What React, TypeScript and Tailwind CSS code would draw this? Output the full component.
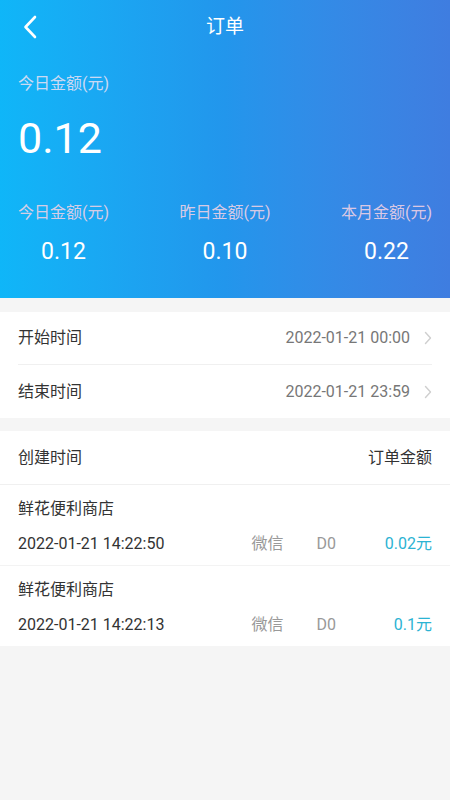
import React from "react";

const font = { fontFamily: 'Roboto, "Noto Sans CJK SC", sans-serif' };

function Chevron() {
  return (
    <svg width="8" height="14" viewBox="0 0 8 14" fill="none">
      <path d="M1.5 1.5 L6.5 7 L1.5 12.5" stroke="#cfcfcf" strokeWidth="1.4" strokeLinecap="round" strokeLinejoin="round" />
    </svg>
  );
}

function Stat({ label, value }: { label: string; value: string }) {
  return (
    <div className="flex flex-col items-center">
      <div className="text-[16px] leading-[20px] text-[#f0d2e4]/90">{label}</div>
      <div className="mt-[15px] text-[23px] leading-[28px] text-white">{value}</div>
    </div>
  );
}

function Item({ time, amount }: { time: string; amount: string }) {
  return (
    <div className="px-[18px] pt-[14px] pb-[11px]">
      <div className="text-[16px] leading-[20px] text-[#333]">鲜花便利商店</div>
      <div className="mt-[15px] flex items-center text-[16px] leading-[20px]">
        <div className="flex-1 text-[#333]">{time}</div>
        <div className="text-[#999]">微信</div>
        <div className="ml-[33px] text-[#999]">D0</div>
        <div className="w-[96px] text-right text-[#2bb3d3]">{amount}</div>
      </div>
    </div>
  );
}

export default function App() {
  return (
    <div className="min-h-[800px] w-[450px] bg-[#f5f5f5]" style={font}>
      <div className="h-[298px] bg-gradient-to-r from-[#0fb6f8] via-[#2296ec] to-[#3f7de0] px-[18px]">
        <div className="relative flex h-[54px] items-center justify-center">
          <svg className="absolute left-[5px] top-[15px]" width="14" height="24" viewBox="0 0 14 24" fill="none">
            <path d="M12 2 L2.5 12 L12 22" stroke="white" strokeWidth="2.6" strokeLinecap="round" strokeLinejoin="round" />
          </svg>
          <div className="text-[19px] leading-[24px] text-white">订单</div>
        </div>
        <div className="mt-[20px] text-[16px] leading-[20px] text-[#e4e0f3]/90">今日金额(元)</div>
        <div className="mt-[20px] text-[43px] leading-[48px] text-white">0.12</div>
        <div className="mt-[41px] flex justify-between">
          <Stat label="今日金额(元)" value="0.12" />
          <Stat label="昨日金额(元)" value="0.10" />
          <Stat label="本月金额(元)" value="0.22" />
        </div>
      </div>

      <div className="mt-[14px] bg-white">
        <div className="flex h-[52px] items-center px-[18px]">
          <div className="flex-1 text-[16px] text-[#333]">开始时间</div>
          <div className="text-[16px] text-[#777]">2022-01-21 00:00</div>
          <div className="ml-[14px]"><Chevron /></div>
        </div>
        <div className="mx-[18px] h-px bg-[#f0f0f0]" />
        <div className="flex h-[53px] items-center px-[18px]">
          <div className="flex-1 text-[16px] text-[#333]">结束时间</div>
          <div className="text-[16px] text-[#777]">2022-01-21 23:59</div>
          <div className="ml-[14px]"><Chevron /></div>
        </div>
      </div>

      <div className="mt-[13px] bg-white">
        <div className="flex h-[53px] items-center justify-between px-[18px] text-[16px] text-[#333]">
          <div>创建时间</div>
          <div>订单金额</div>
        </div>
        <div className="h-px bg-[#f0f0f0]" />
        <Item time="2022-01-21 14:22:50" amount="0.02元" />
        <div className="h-px bg-[#f3f3f3]" />
        <Item time="2022-01-21 14:22:13" amount="0.1元" />
      </div>
    </div>
  );
}
